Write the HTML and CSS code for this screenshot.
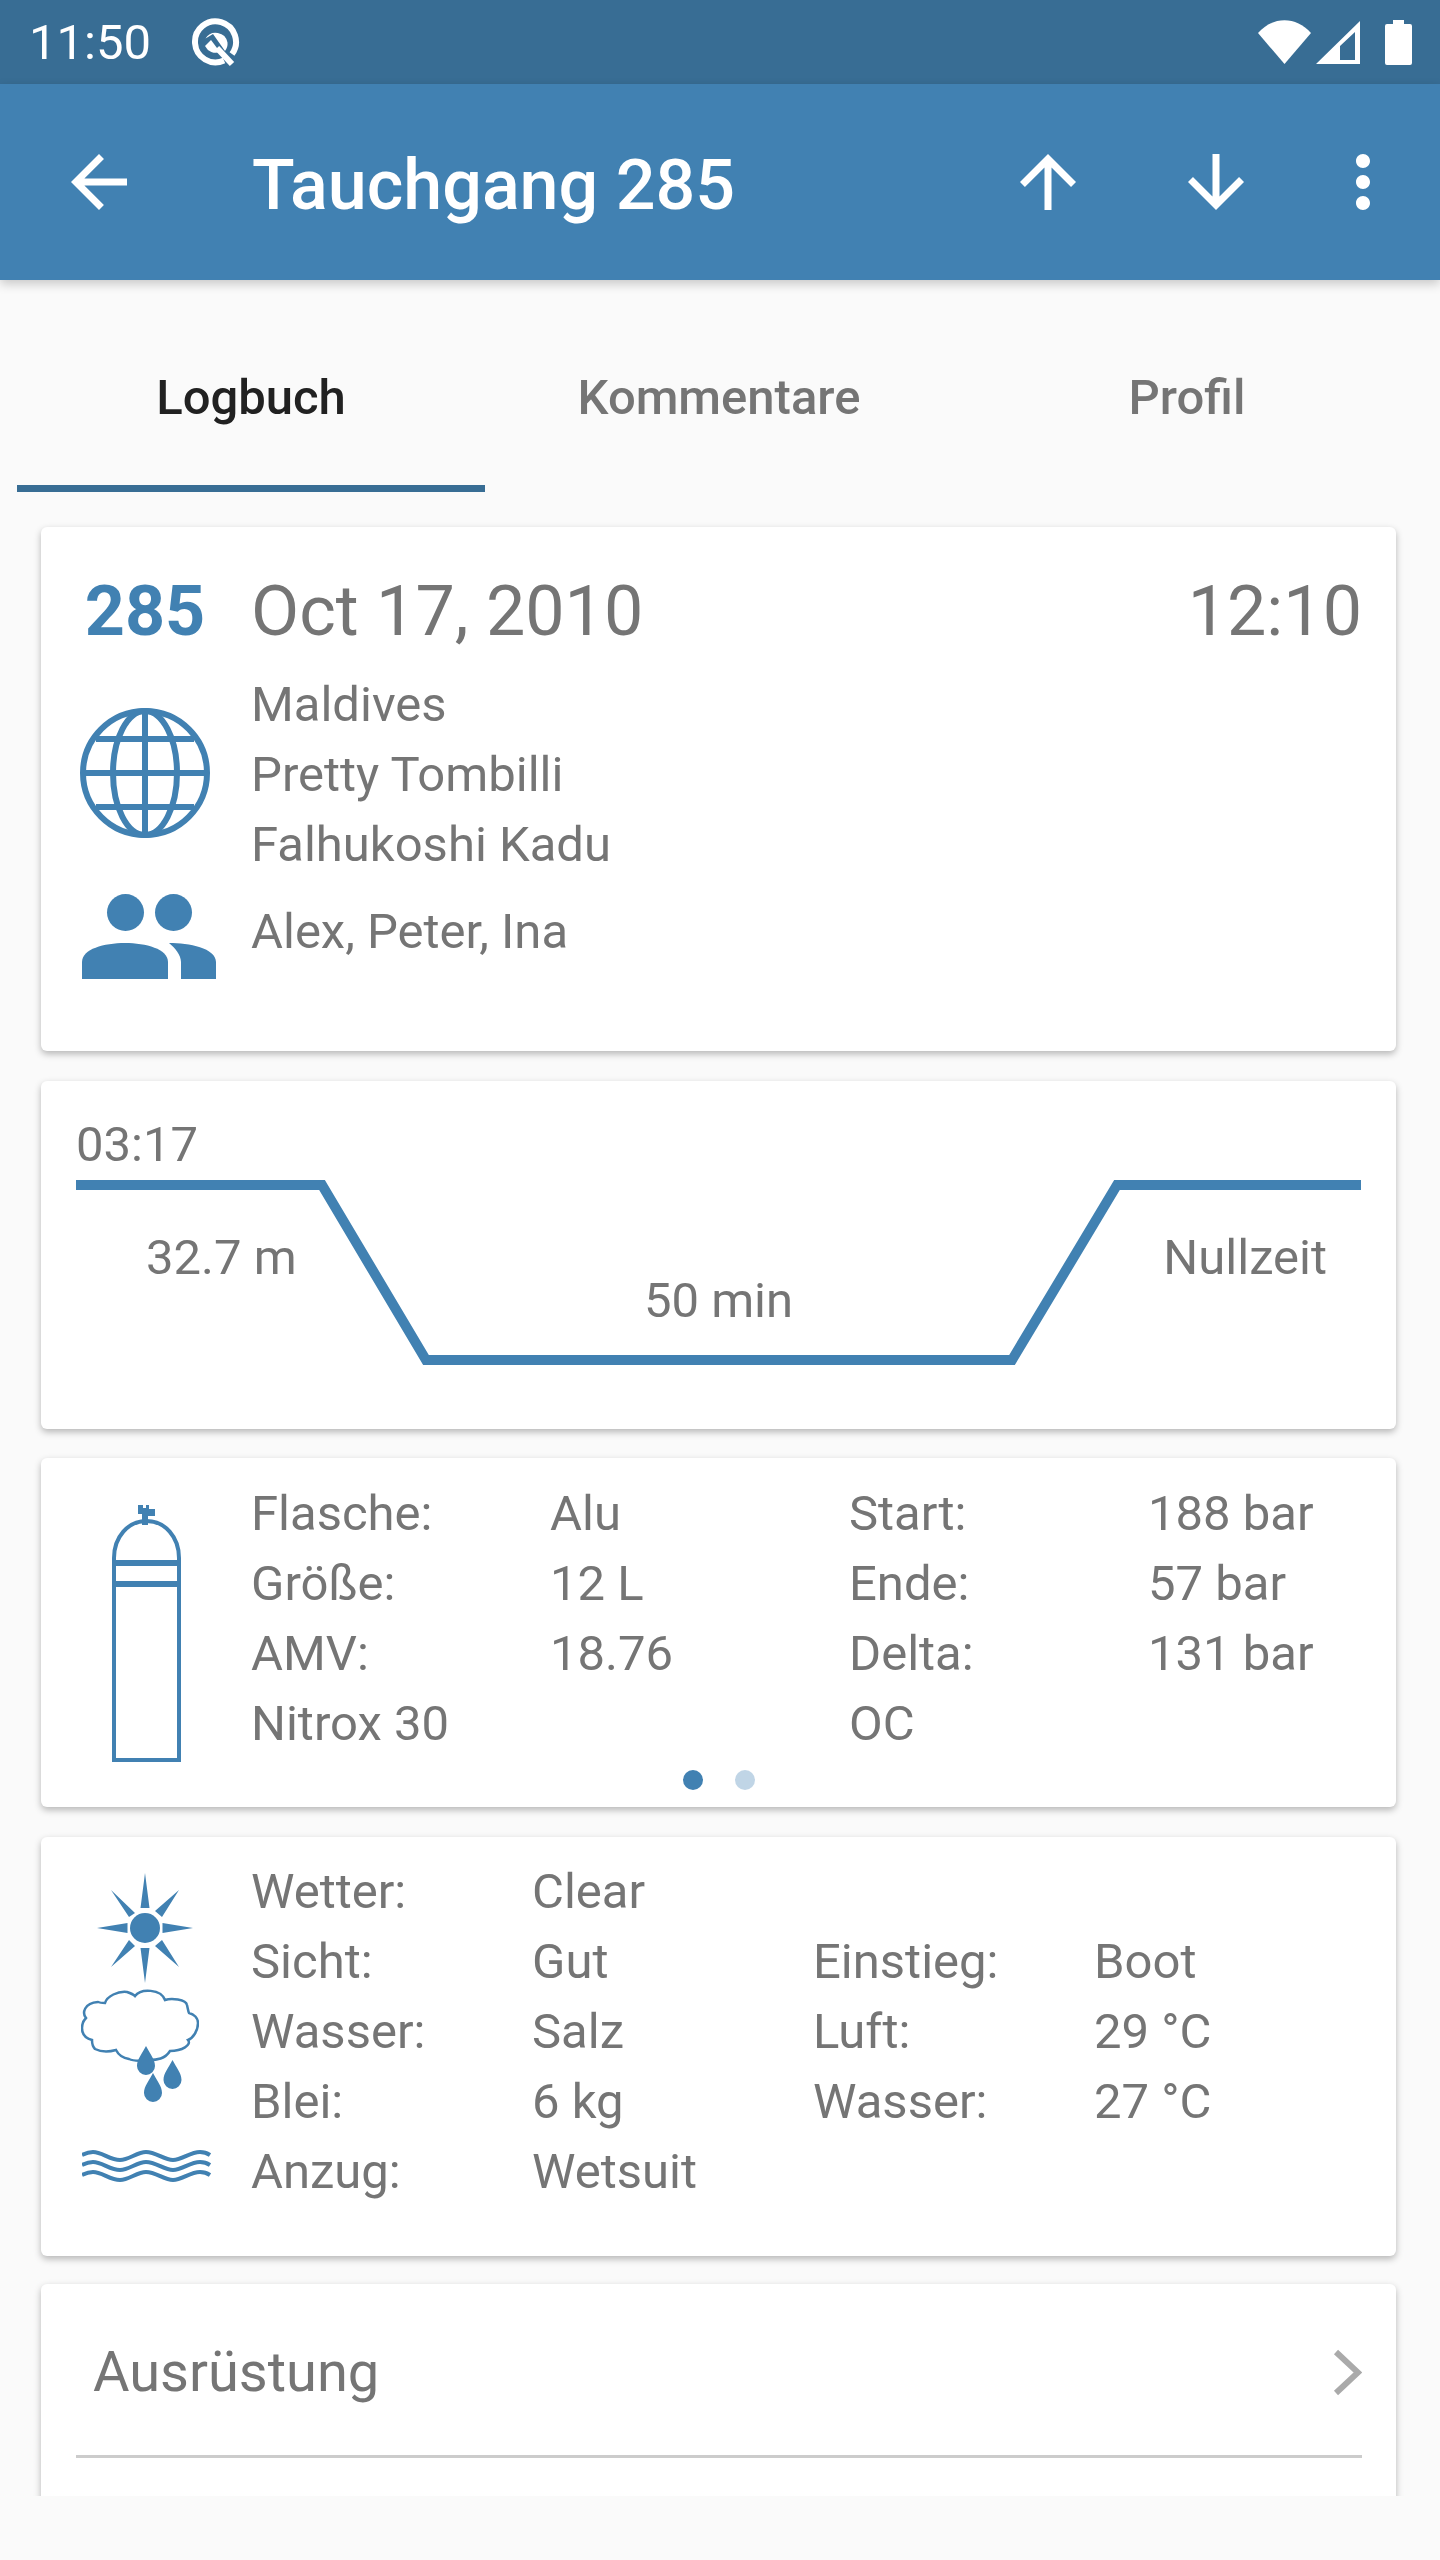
FILE: index.html
```html
<!DOCTYPE html>
<html lang="de">
<head>
  <meta charset="UTF-8">
  <title>Tauchgang 285</title>
  <link rel="stylesheet" href="styles.css">
</head>
<body>
  <div class="screen">

    <!-- Statusleiste -->
    <div class="statusbar">
      <span class="clock">11:50</span>
      <svg class="q-icon" viewBox="0 0 49 49">
        <path class="q-ring" d="M33 42.500A20.500 20.500 0 1 1 41 36"/>
        <path class="q-line" d="M26 30l15 16"/>
        <path class="white" d="M14.500 20.500A12 12 0 0 1 36.500 24.500A12 12 0 0 1 34 33L22 16z"/>
        <path class="white" d="M14 28l6-6 9 12a12 12 0 0 1-15-6z"/>
      </svg>
      <div class="status-right">
        <svg class="wifi" viewBox="0 0 53 44"><path class="white" d="M0 13C15-4 38-4 53 13L26.500 44z"/></svg>
        <svg class="signal" viewBox="0 0 44 43"><path class="white" fill-rule="evenodd" d="M44 0v43H0zM39 11L24 25v14h15z"/></svg>
        <svg class="battery" viewBox="0 0 27 45"><path class="white" d="M8 0h11v4h6a2 2 0 0 1 2 2v37a2 2 0 0 1-2 2H2a2 2 0 0 1-2-2V6a2 2 0 0 1 2-2h6z"/></svg>
      </div>
    </div>

    <!-- Titelleiste -->
    <div class="appbar">
      <svg class="bar-icon back" viewBox="0 0 24 24"><path d="M20 11H7.830l5.590-5.590L12 4l-8 8 8 8 1.410-1.410L7.830 13H20v-2z"/></svg>
      <h1>Tauchgang 285</h1>
      <svg class="bar-icon up" viewBox="0 0 24 24"><path d="M4 12l1.410 1.410L11 7.830V20h2V7.830l5.580 5.590L20 12l-8-8-8 8z"/></svg>
      <svg class="bar-icon down" viewBox="0 0 24 24"><path d="M20 12l-1.410-1.410L13 16.170V4h-2v12.170l-5.580-5.590L4 12l8 8 8-8z"/></svg>
      <svg class="bar-icon more" viewBox="0 0 24 24"><path d="M12 8c1.100 0 2-.9 2-2s-.9-2-2-2-2 .9-2 2 .9 2 2 2zm0 2c-1.100 0-2 .9-2 2s.9 2 2 2 2-.9 2-2-.9-2-2-2zm0 6c-1.100 0-2 .9-2 2s.9 2 2 2 2-.9 2-2-.9-2-2-2z"/></svg>
    </div>

    <!-- Tabs -->
    <div class="tabs">
      <div class="tab active">Logbuch</div>
      <div class="tab">Kommentare</div>
      <div class="tab">Profil</div>
    </div>

    <div class="content">

      <!-- Karte: Tauchplatz -->
      <div class="card card-site">
        <div class="head-row">
          <div class="icon-col dive-no">285</div>
          <div class="date">Oct 17, 2010</div>
          <div class="time">12:10</div>
        </div>
        <div class="site-row">
          <div class="icon-col">
            <svg class="globe" viewBox="0 0 130 130">
              <g class="line-blue">
                <ellipse cx="65" cy="65" rx="62" ry="62"/>
                <ellipse cx="65" cy="65" rx="32" ry="62"/>
                <path d="M65 3v124M3 65h124M16 31h98M16 99h98"/>
              </g>
            </svg>
          </div>
          <div class="text-col">
            <div>Maldives</div>
            <div>Pretty Tombilli</div>
            <div>Falhukoshi Kadu</div>
          </div>
        </div>
        <div class="people-row">
          <div class="icon-col">
            <svg class="people" viewBox="0 0 134 85">
              <circle class="blue" cx="43.500" cy="18.500" r="18.500"/>
              <circle class="blue" cx="91.500" cy="18.500" r="18.500"/>
              <path class="blue" d="M0 85V68C0 55 22 49 43 49s43 6 43 19v17z"/>
              <path class="blue" d="M87 49c20 0 47 5 47 19v17H99V68c0-7-6-14-12-19z"/>
            </svg>
          </div>
          <div class="text-col">Alex, Peter, Ina</div>
        </div>
      </div>

      <!-- Karte: Tauchprofil -->
      <div class="card card-profile">
        <svg class="profile-line" viewBox="0 0 1285 185">
          <path d="M0 5H246L350 180H936L1041 5H1285"/>
        </svg>
        <span class="label label-start">03:17</span>
        <span class="label label-depth">32.7 m</span>
        <span class="label label-bottom">50 min</span>
        <span class="label label-deco">Nullzeit</span>
      </div>

      <!-- Karte: Flasche -->
      <div class="card card-tank">
        <div class="icon-col">
          <svg class="tank" viewBox="0 0 69 257">
            <path class="blue" d="M26 0h5v3h3V0h3v4h6v7h-7v9h-6V9h-4z"/>
            <g class="line-thin">
              <path d="M2 255V53C2 32 16 16 34.500 16S67 32 67 53v202z"/>
              <path class="thick" d="M2 58h65M2 79h65"/>
            </g>
          </svg>
        </div>
        <div class="tank-grid">
          <div>Flasche:</div><div>Alu</div><div>Start:</div><div>188 bar</div>
          <div>Größe:</div><div>12 L</div><div>Ende:</div><div>57 bar</div>
          <div>AMV:</div><div>18.76</div><div>Delta:</div><div>131 bar</div>
          <div>Nitrox 30</div><div></div><div>OC</div><div></div>
        </div>
        <div class="dots"><span class="dot on"></span><span class="dot"></span></div>
      </div>

      <!-- Karte: Bedingungen -->
      <div class="card card-weather">
        <div class="icon-col weather-icons">
          <svg class="sun" viewBox="0 0 96 110">
            <circle class="blue" cx="48" cy="55" r="15"/>
            <path class="blue" d="M48 0l4.500 35h-9zM48 110l-4.500-35h9zM0 55l30.500-5v10zM96 55l-30.500 5v-10zM14 17l24 23-6 4zM82 17L65 44l-7-6zM14 94l18-27 6 6zM82 94L58 73l7-6z"/>
          </svg>
          <svg class="cloud" viewBox="0 0 118 114">
            <path class="line-cloud" d="M11 51C3 49 1 44 1 39C1 34 3 31 5 29C1 24 3 14 17 13C19 14 22 14 24 14C26 7 37 2 46 3C49 4 52 5 54 7C60 -1 80 0 84 11C90 9 105 10 106 16C107 20 107 22 108 24C113 25 117 29 117 34C117 42 112 49 107 51C111 56 101 62 89 62C84 70 76 71 68 71C60 72 52 72 48 70C42 69 37 65 35 61C28 63 20 63 14 60C12 58 11 55 11 51z"/>
            <path class="blue" d="M65 57c4 8 9 13 9 20a9 9 0 0 1-18 0c0-7 5-12 9-20zM91.500 71c4 8 9 13 9 20a9 9 0 0 1-18 0c0-7 5-12 9-20zM72 84c4 8 9 13 9 20a9 9 0 0 1-18 0c0-7 5-12 9-20z"/>
          </svg>
          <svg class="waves" viewBox="0 0 129 33">
            <path class="line-wave" d="M0 6C4 4 7 3 11 3C20 3 28 11 38 11C47 11 55 3 64 3C74 3 82 11 91 11C100 11 108 3 118 3C122 3 125 4 128 6"/>
            <path class="line-wave" d="M0 16C4 14 7 13 11 13C20 13 28 21 38 21C47 21 55 13 64 13C74 13 82 21 91 21C100 21 108 13 118 13C122 13 125 14 128 16"/>
            <path class="line-wave" d="M0 26C4 24 7 23 11 23C20 23 28 31 38 31C47 31 55 23 64 23C74 23 82 31 91 31C100 31 108 23 118 23C122 23 125 24 128 26"/>
          </svg>
        </div>
        <div class="weather-grid">
          <div>Wetter:</div><div>Clear</div><div></div><div></div>
          <div>Sicht:</div><div>Gut</div><div>Einstieg:</div><div>Boot</div>
          <div>Wasser:</div><div>Salz</div><div>Luft:</div><div>29 °C</div>
          <div>Blei:</div><div>6 kg</div><div>Wasser:</div><div>27 °C</div>
          <div>Anzug:</div><div>Wetsuit</div><div></div><div></div>
        </div>
      </div>

      <!-- Karte: Ausruestung, unten abgeschnitten -->
      <div class="card card-gear">
        <div class="gear-row">
          <span>Ausrüstung</span>
          <svg class="chevron" viewBox="0 0 29 47"><path d="M3 3l22 20.500L3 44"/></svg>
        </div>
      </div>

    </div>
  </div>
</body>
</html>
```

FILE: styles.css
```css
html, body {
  margin: 0;
  padding: 0;
}
body {
  font-family: Roboto, "Liberation Sans", sans-serif;
  background: #fafafa;
}
svg {
  display: block;
}
.screen {
  width: 1440px;
  height: 2560px;
  overflow: hidden;
  background: #fafafa;
}
.white {
  fill: #fff;
}
.blue {
  fill: #4181b2;
}

/* statusbar */
.statusbar {
  height: 84px;
  background: #386d94;
  display: flex;
  align-items: center;
  padding: 0 28px 0 29px;
  box-sizing: border-box;
  color: #fff;
}
.clock {
  font-size: 49px;
  width: 162px;
}
.q-icon {
  width: 49px;
  height: 49px;
}
.q-ring, .q-line {
  fill: none;
  stroke: #fff;
  stroke-width: 6;
}
.status-right {
  margin-left: auto;
  display: flex;
  align-items: center;
}
.wifi {
  width: 53px;
  height: 44px;
  margin-right: 5px;
}
.signal {
  width: 44px;
  height: 43px;
  margin-right: 25px;
}
.battery {
  width: 27px;
  height: 45px;
}

/* appbar */
.appbar {
  height: 196px;
  background: #4181b2;
  display: flex;
  align-items: center;
  padding: 0 35px 0 57px;
  box-sizing: border-box;
  box-shadow: 0 4px 10px rgba(0,0,0,0.2);
  position: relative;
}
.appbar h1 {
  margin: 0 0 0 111px;
  padding-top: 6px;
  font-size: 70px;
  font-weight: 500;
  color: #fff;
  flex: 1;
}
.bar-icon {
  width: 84px;
  height: 84px;
  fill: #fff;
}
.down {
  margin-left: 84px;
}
.more {
  margin-left: 63px;
}

/* tabs */
.tabs {
  height: 212px;
  display: flex;
  padding: 0 19px 0 17px;
}
.tab {
  flex: 1;
  display: flex;
  align-items: center;
  justify-content: center;
  font-size: 49px;
  font-weight: 500;
  color: #757575;
  box-sizing: border-box;
  border-bottom: 7px solid transparent;
  padding-top: 30px;
}
.tab.active {
  color: #212121;
  border-bottom-color: #386d94;
}

/* cards */
.content {
  height: 2004px;
  overflow: hidden;
  padding: 35px 44px 0 41px;
  box-sizing: border-box;
  display: flex;
  flex-direction: column;
  gap: 30px;
  font-size: 49px;
  line-height: 70px;
  color: #757575;
}
.card {
  background: #fff;
  border-radius: 6px;
  box-shadow: 0 3px 7px rgba(0,0,0,0.28);
  flex: none;
  box-sizing: border-box;
  position: relative;
}
.icon-col {
  width: 136px;
  flex: none;
  display: flex;
  justify-content: center;
  align-items: center;
}
.text-col {
  margin-left: 38px;
}
.line-blue {
  fill: none;
  stroke: #4181b2;
  stroke-width: 6;
}

/* card 1 */
.card-site {
  height: 524px;
  padding: 43px 34px 0 36px;
}
.head-row {
  display: flex;
  align-items: center;
  height: 82px;
  font-size: 70px;
  line-height: 82px;
  margin-bottom: 18px;
}
.dive-no {
  font-weight: 700;
  color: #4181b2;
}
.date {
  margin-left: 38px;
  flex: 1;
}
.site-row {
  display: flex;
  align-items: center;
}
.people-row {
  display: flex;
  align-items: flex-start;
  margin-top: 17px;
}
.globe {
  width: 130px;
  height: 130px;
  margin-bottom: 5px;
}
.people {
  width: 134px;
  height: 85px;
  margin: -3px 0 -15px 8px;
  flex: none;
}

/* card 2 */
.card-profile {
  height: 348px;
}
.profile-line {
  position: absolute;
  left: 35px;
  top: 99px;
  width: 1285px;
  height: 185px;
  fill: none;
  stroke: #4181b2;
  stroke-width: 10;
}
.label {
  position: absolute;
  white-space: nowrap;
}
.label-start {
  left: 35px;
  top: 29px;
}
.label-depth {
  left: 105px;
  top: 142px;
}
.label-bottom {
  left: 0;
  right: 0;
  text-align: center;
  top: 185px;
}
.label-deco {
  right: 69px;
  top: 142px;
}

/* card 3 */
.card-tank {
  height: 349px;
  margin-top: -1px;
  padding: 21px 0 0 36px;
  display: flex;
}
.tank-grid {
  margin-left: 38px;
  display: grid;
  grid-template-columns: repeat(4, 299px);
  grid-auto-rows: 70px;
}
.card-tank .icon-col {
  align-items: flex-start;
  padding-top: 26px;
}
.tank {
  width: 69px;
  height: 257px;
  margin-left: 3px;
}
.line-thin {
  fill: none;
  stroke: #4181b2;
  stroke-width: 4;
}
.line-thin .thick {
  stroke-width: 6;
}
.dots {
  position: absolute;
  left: 0;
  right: 0;
  bottom: 17px;
  display: flex;
  justify-content: center;
  gap: 32px;
}
.dot {
  width: 20px;
  height: 20px;
  border-radius: 50%;
  background: #4181b2;
  opacity: 0.33;
}
.dot.on {
  opacity: 1;
}

/* card 4 */
.card-weather {
  height: 419px;
  padding: 20px 0 0 36px;
  display: flex;
}
.weather-icons {
  flex-direction: column;
  justify-content: flex-start;
}
.weather-grid {
  margin-left: 38px;
  display: grid;
  grid-template-columns: repeat(4, 281px);
  grid-auto-rows: 70px;
}
.sun {
  width: 96px;
  height: 110px;
  margin-top: 16px;
}
.cloud {
  width: 118px;
  height: 114px;
  margin-top: 6px;
  margin-left: -10px;
}
.line-cloud {
  fill: none;
  stroke: #4181b2;
  stroke-width: 2.500;
}
.waves {
  width: 129px;
  height: 33px;
  margin-top: 46px;
  margin-left: 3px;
}
.line-wave {
  fill: none;
  stroke: #4181b2;
  stroke-width: 4;
}

/* card 5 */
.card-gear {
  height: 300px;
  margin-top: -2px;
  padding: 0 34px 0 35px;
}
.gear-row {
  height: 174px;
  display: flex;
  align-items: center;
  justify-content: space-between;
  border-bottom: 3px solid #ccc;
  box-sizing: border-box;
  font-size: 56px;
  padding: 5px 0 0 17px;
}
.chevron {
  width: 29px;
  height: 47px;
  fill: none;
  stroke: #aaa;
  stroke-width: 6;
}
```
